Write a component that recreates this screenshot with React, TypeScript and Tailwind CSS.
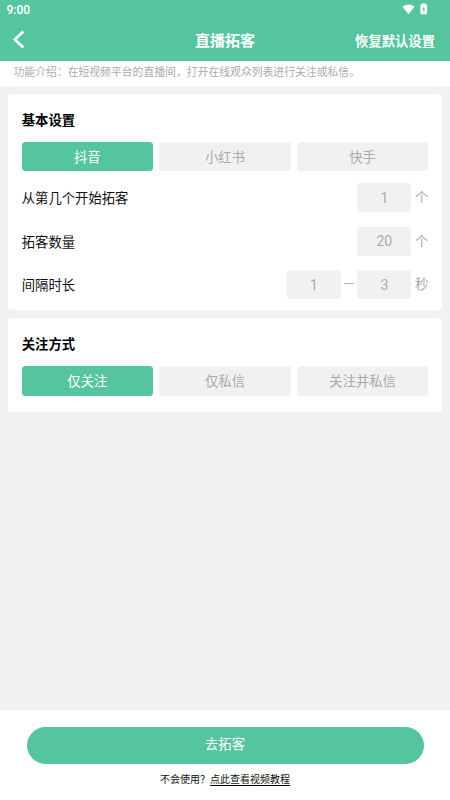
import { useState } from 'react'
import clsx from 'clsx'

const platforms = ['抖音', '小红书', '快手']
const followModes = ['仅关注', '仅私信', '关注并私信']

function StatusBar() {
  return (
    <div className="flex h-5 justify-between pl-[6.5px] pr-[22.5px]">
      <span className="text-[12px] leading-[20px] font-medium">9:00</span>
      <div className="flex gap-[5px] pt-[3px]">
        <svg width="13" height="12" viewBox="0 0 13 12" fill="currentColor">
          <path d="M6.5 11.3 0.4 3.8Q6.5-1 12.6 3.8Z" />
        </svg>
        <svg width="8" height="12" viewBox="0 0 8 12" fill="currentColor">
          <path
            fillRule="evenodd"
            d="M2.4 0.3h2.8v1H6.3q.8 0 .8.8v8.3q0 .8-.8.8H1.2q-.8 0-.8-.8V2.1q0-.8.8-.8h1.2ZM4.2 3.2 2.3 6.8h1.1v2.5L5.3 5.8H4.2Z"
          />
        </svg>
      </div>
    </div>
  )
}

function Options({ items }: { items: string[] }) {
  const [active, setActive] = useState(0)

  return (
    <div className="grid grid-cols-3 gap-[6.5px]">
      {items.map((item, i) => (
        <button
          key={item}
          onClick={() => setActive(i)}
          className={clsx(
            'h-[29.2px] rounded-[3.5px] pt-[1.5px] text-[13.33px] leading-[28px]',
            i === active ? 'bg-[#55c59f] text-white' : 'bg-[#f1f1f1] text-[#aaaaaa]'
          )}
        >
          {item}
        </button>
      ))}
    </div>
  )
}

function NumberBox({ value }: { value: string }) {
  return (
    <input
      defaultValue={value}
      className="h-[29.2px] w-[54px] rounded-[3.5px] bg-[#f1f1f1] text-center text-[14px] text-[#aaaaaa] outline-none"
    />
  )
}

function Row({ label, values, unit }: { label: string; values: string[]; unit: string }) {
  return (
    <div className="flex h-[29.2px] items-center text-[13.33px]">
      <span className="flex-1 pt-[3px]">{label}</span>
      {values.map((value, i) => (
        <div key={i} className="flex items-center">
          {i > 0 && <span className="mx-[3.5px] mb-[2px] h-[1.3px] w-[9.5px] bg-[#b8b8b8]" />}
          <NumberBox value={value} />
        </div>
      ))}
      <span className="ml-[3.5px] pt-px text-[#aaaaaa]">{unit}</span>
    </div>
  )
}

function App() {
  return (
    <div className="flex h-[800px] w-[450px] flex-col bg-[#f1f1f1] font-[Roboto,'Noto_Sans_CJK_SC',sans-serif] text-[#111111]">
      <header className="h-[61px] bg-[#55c59f] text-white">
        <StatusBar />
        <div className="grid h-10 grid-cols-3 items-center px-[13.5px]">
          <svg className="-ml-[1.5px]" width="14" height="20" viewBox="0 0 14 20" fill="none" stroke="currentColor" strokeWidth="2.7">
            <path d="M11.3 1.5 2.8 9.5l8.5 8" />
          </svg>
          <h1 className="pt-[2px] text-center text-[15px] font-bold">直播拓客</h1>
          <button className="pt-[4px] pr-[1.5px] text-right text-[13.33px] font-bold">恢复默认设置</button>
        </div>
      </header>

      <p className="h-[25px] bg-white pl-[13.5px] text-[10.83px] leading-[24px] text-[#aaaaaf]">
        功能介绍：在短视频平台的直播间，打开在线观众列表进行关注或私信。
      </p>

      <main className="flex flex-1 flex-col gap-[8.3px] px-[8.3px] pt-[8.3px]">
        <section className="h-[215.8px] rounded-[4px] bg-white px-[13.5px] pt-[17px]">
          <h2 className="mb-[11px] text-[13.33px] leading-[20px] font-bold text-black">基本设置</h2>
          <Options items={platforms} />
          <div className="mt-[11.8px] flex flex-col gap-[14.2px]">
            <Row label="从第几个开始拓客" values={['1']} unit="个" />
            <Row label="拓客数量" values={['20']} unit="个" />
            <Row label="间隔时长" values={['1', '3']} unit="秒" />
          </div>
        </section>

        <section className="h-[94px] rounded-[4px] bg-white px-[13.5px] pt-[17px]">
          <h2 className="mb-[11px] text-[13.33px] leading-[20px] font-bold text-black">关注方式</h2>
          <Options items={followModes} />
        </section>
      </main>

      <footer className="flex h-[90px] flex-col items-center bg-white pt-[16.5px]">
        <button className="h-[37.5px] w-[397px] rounded-full bg-[#55c59f] text-[13.33px] text-white">去拓客</button>
        <p className="mt-[8px] text-[10px] leading-[16px]">
          不会使用？
          <a className="inline-block h-[14px] border-b border-black">点此查看视频教程</a>
        </p>
      </footer>
    </div>
  )
}

export default App
